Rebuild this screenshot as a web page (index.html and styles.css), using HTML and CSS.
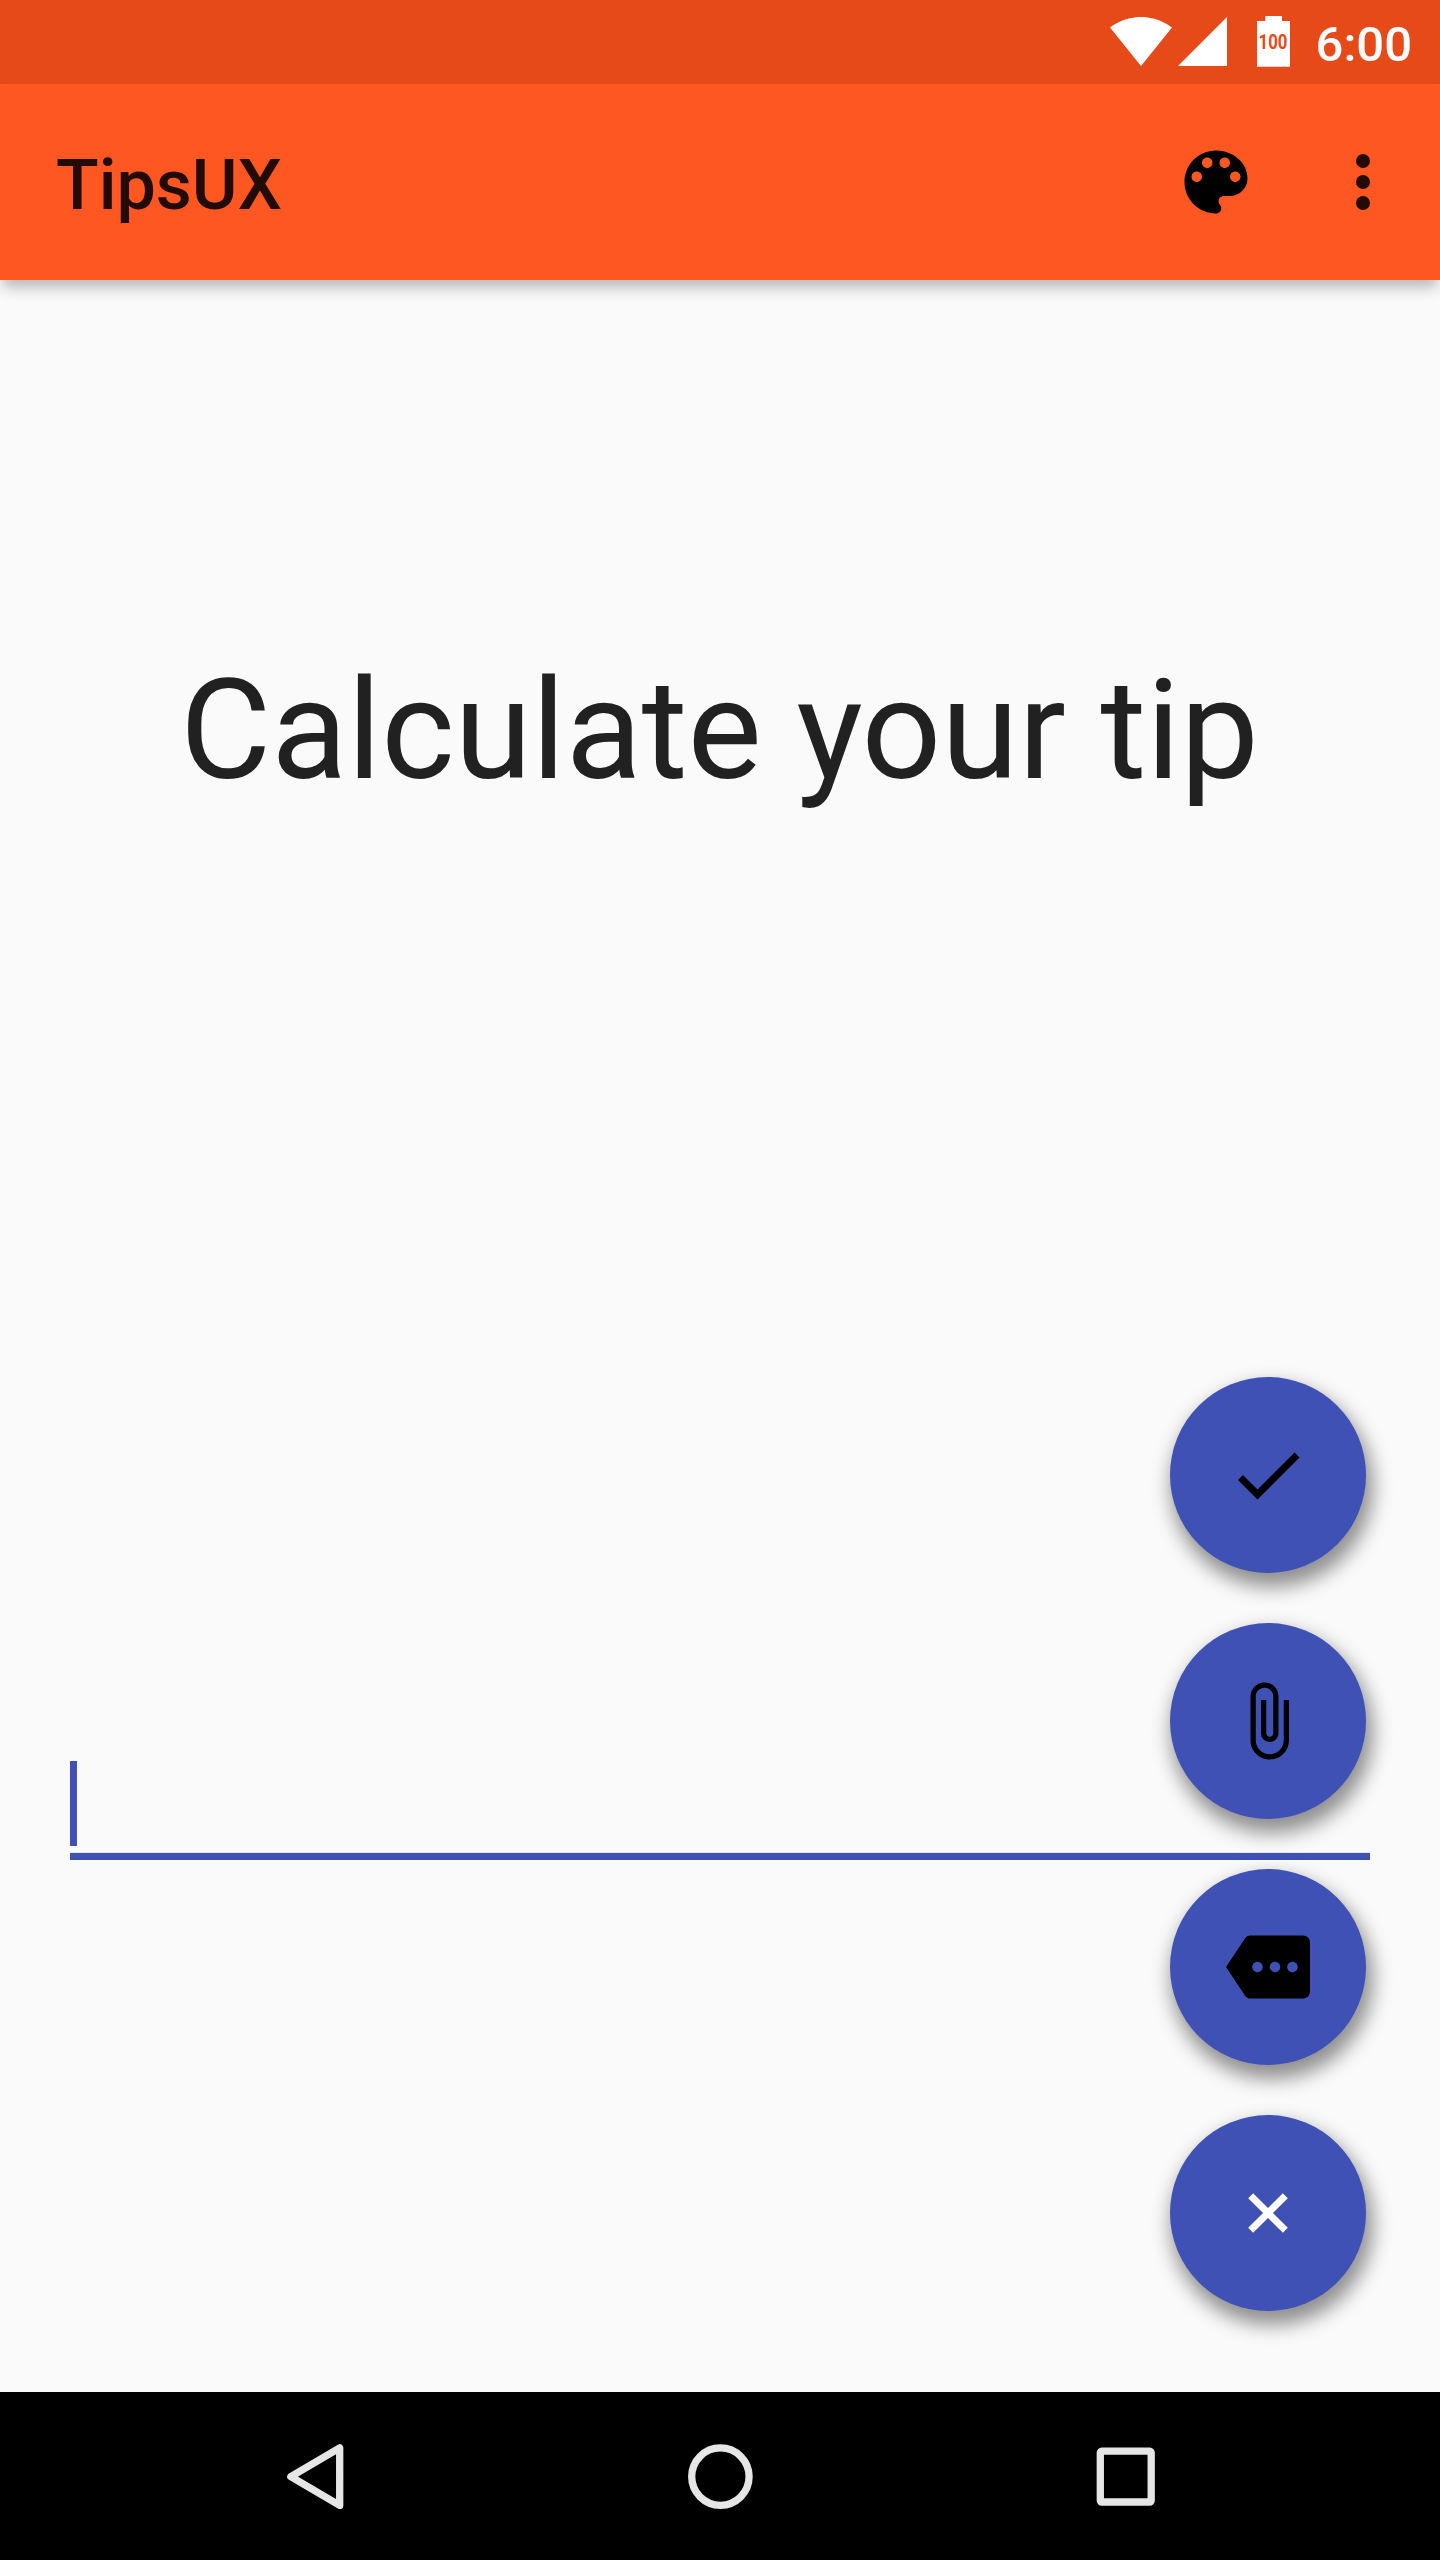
FILE: index.html
```html
<!DOCTYPE html>
<html lang="en">
<head>
<meta charset="utf-8">
<title>TipsUX</title>
<link rel="stylesheet" href="styles.css">
</head>
<body>
<div class="screen">
  <div class="status-bar">
    <svg class="wifi" viewBox="0.36 3 23.28 18.5" preserveAspectRatio="none"><path d="M12.01 21.49L23.64 7c-.45-.34-4.93-4-11.64-4C5.28 3 .81 6.66.36 7l11.63 14.49.01.01.01-.01z"/></svg>
    <svg class="signal" viewBox="0 0 49 49"><path d="M0 49H49V0z"/></svg>
    <div class="battery">
      <svg viewBox="0 0 33 51"><path d="M8.3 0H25v5H33V50.7H0V5H8.3z"/></svg>
      <span class="battery-level">100</span>
    </div>
    <span class="clock">6:00</span>
  </div>

  <header class="toolbar">
    <h1 class="title">TipsUX</h1>
    <svg class="icon palette" viewBox="0 0 24 24"><path d="M12 3c-4.97 0-9 4.03-9 9s4.03 9 9 9c.83 0 1.5-.67 1.5-1.5 0-.39-.15-.74-.39-1.01-.23-.26-.38-.61-.38-.99 0-.83.67-1.5 1.5-1.5H16c2.76 0 5-2.24 5-5 0-4.42-4.03-8-9-8zm-5.5 9c-.83 0-1.5-.67-1.5-1.5S5.67 9 6.5 9 8 9.67 8 10.5 7.33 12 6.5 12zm3-4C8.67 8 8 7.33 8 6.5S8.67 5 9.5 5s1.5.67 1.5 1.5S10.33 8 9.5 8zm5 0c-.83 0-1.5-.67-1.5-1.5S13.67 5 14.5 5s1.5.67 1.5 1.5S15.33 8 14.5 8zm3 4c-.83 0-1.5-.67-1.5-1.5S16.67 9 17.5 9s1.5.67 1.5 1.5-.67 1.5-1.5 1.5z"/></svg>
    <svg class="icon overflow" viewBox="0 0 24 24"><circle cx="12" cy="6" r="2"/><circle cx="12" cy="12" r="2"/><circle cx="12" cy="18" r="2"/></svg>
  </header>

  <main class="content">
    <h2 class="heading">Calculate your tip</h2>
    <div class="field"><span class="caret"></span></div>

    <div class="fab-menu">
      <button class="fab" aria-label="Done"><svg class="icon" viewBox="0 0 24 24"><path d="M9 16.17L4.83 12l-1.42 1.41L9 19 21 7l-1.41-1.41z"/></svg></button>
      <button class="fab" aria-label="Attach"><svg class="icon" viewBox="0 0 24 24"><path d="M16.5 6v11.5c0 2.21-1.79 4-4 4s-4-1.79-4-4V5c0-1.38 1.12-2.5 2.5-2.5s2.5 1.12 2.5 2.5v10.5c0 .55-.45 1-1 1s-1-.45-1-1V6H10v9.5c0 1.38 1.12 2.5 2.5 2.5s2.5-1.12 2.5-2.5V5c0-2.21-1.79-4-4-4S7 2.79 7 5v12.5c0 3.04 2.46 5.5 5.5 5.5s5.5-2.46 5.5-5.5V6h-1.5z"/></svg></button>
      <button class="fab" aria-label="More"><svg class="icon" viewBox="0 0 24 24"><path d="M22 3H7c-.69 0-1.23.35-1.59.88L0 12l5.41 8.11c.36.53.9.89 1.59.89h15c1.1 0 2-.9 2-2V5c0-1.1-.9-2-2-2zM9 13.5c-.83 0-1.5-.67-1.5-1.5s.67-1.5 1.5-1.5 1.5.67 1.5 1.5-.67 1.5-1.5 1.5zm5 0c-.83 0-1.5-.67-1.5-1.5s.67-1.5 1.5-1.5 1.5.67 1.5 1.5-.67 1.5-1.5 1.5zm5 0c-.83 0-1.5-.67-1.5-1.5s.67-1.5 1.5-1.5 1.5.67 1.5 1.5-.67 1.5-1.5 1.5z"/></svg></button>
      <button class="fab fab-close" aria-label="Close"><svg class="icon" viewBox="0 0 24 24"><path transform="rotate(45 12 12)" d="M19 13h-6v6h-2v-6H5v-2h6V5h2v6h6v2z"/></svg></button>
    </div>
  </main>

  <nav class="nav-bar">
    <svg class="nav-icon" viewBox="0 0 84 84"><path d="M66.7 13.9V71.4L17.8 42.65z"/></svg>
    <svg class="nav-icon" viewBox="0 0 84 84"><circle cx="42.4" cy="42.6" r="28.7"/></svg>
    <svg class="nav-icon" viewBox="0 0 84 84"><rect x="17.3" y="17.1" width="50.9" height="50.9" rx="1.5"/></svg>
  </nav>
</div>
</body>
</html>
```
FILE: styles.css
```css
* {
  box-sizing: border-box;
}

body {
  margin: 0;
  font-family: Roboto, sans-serif;
}

.screen {
  display: flex;
  flex-direction: column;
  width: 1440px;
  height: 2560px;
  overflow: hidden;
  background: #fafafa;
}

svg {
  display: block;
  flex: none;
}

.icon {
  width: 84px;
  height: 84px;
}

.status-bar {
  display: flex;
  justify-content: flex-end;
  align-items: flex-start;
  height: 84px;
  padding: 16px 28px 0 0;
  background: #e64a19;
  color: #fff;
  fill: #fff;
}

.wifi {
  width: 62px;
  height: 49px;
  margin: 1px 6px 0 0;
}

.signal {
  width: 49px;
  height: 49px;
  margin: 1px 30px 0 0;
}

.battery {
  position: relative;
  width: 33px;
  height: 51px;
  margin-right: 26px;
}

.battery svg {
  width: 33px;
  height: 51px;
}

.battery-level {
  position: absolute;
  left: 50%;
  top: 15px;
  transform: translateX(-50%) scaleX(0.84);
  font-size: 20px;
  line-height: 22px;
  font-weight: 700;
  color: #e64a19;
}

.clock {
  font-size: 49px;
  line-height: 57px;
  font-weight: 500;
}

.toolbar {
  position: relative;
  display: flex;
  align-items: center;
  height: 196px;
  padding: 0 35px 0 56px;
  background: #ff5722;
  box-shadow: 0 10px 14px -3px rgba(0, 0, 0, 0.28);
}

.title {
  flex: 1;
  margin: 0;
  padding-top: 6px;
  font-size: 70px;
  line-height: 82px;
  font-weight: 500;
  color: rgba(0, 0, 0, 0.87);
}

.palette {
  margin-right: 63px;
}

.overflow {
  fill: rgba(0, 0, 0, 0.87);
}

.content {
  position: relative;
  display: flex;
  flex-direction: column;
  flex: 1;
  padding: 368px 70px 0;
}

.heading {
  margin: 0;
  padding-right: 1px;
  font-size: 140px;
  line-height: 164px;
  font-weight: 400;
  letter-spacing: -0.04px;
  text-align: center;
  white-space: nowrap;
  color: #212121;
}

.field {
  height: 99px;
  margin-top: 949px;
  border-bottom: 7px solid #3f51b5;
  box-shadow: inset 0 -1px #e3e5f1;
}

.caret {
  display: block;
  width: 7px;
  height: 85px;
  background: #3f51b5;
}

.fab-menu {
  position: absolute;
  right: 74px;
  bottom: 81px;
  display: flex;
  flex-direction: column;
  gap: 50px;
}

.fab {
  display: flex;
  align-items: center;
  justify-content: center;
  width: 196px;
  height: 196px;
  padding: 0;
  border: 0;
  border-radius: 50%;
  background: #3f51b5;
  box-shadow: 4px 11px 19px 3px rgba(0, 0, 0, 0.43);
}

.fab-close {
  fill: #fff;
}

.nav-bar {
  display: grid;
  grid-template-columns: repeat(3, 84px);
  justify-content: center;
  align-items: center;
  column-gap: 321px;
  height: 168px;
  background: #000;
}

.nav-icon {
  width: 84px;
  height: 84px;
  fill: none;
  stroke: #e6e6e6;
  stroke-width: 7.3;
  stroke-linejoin: round;
}
```
